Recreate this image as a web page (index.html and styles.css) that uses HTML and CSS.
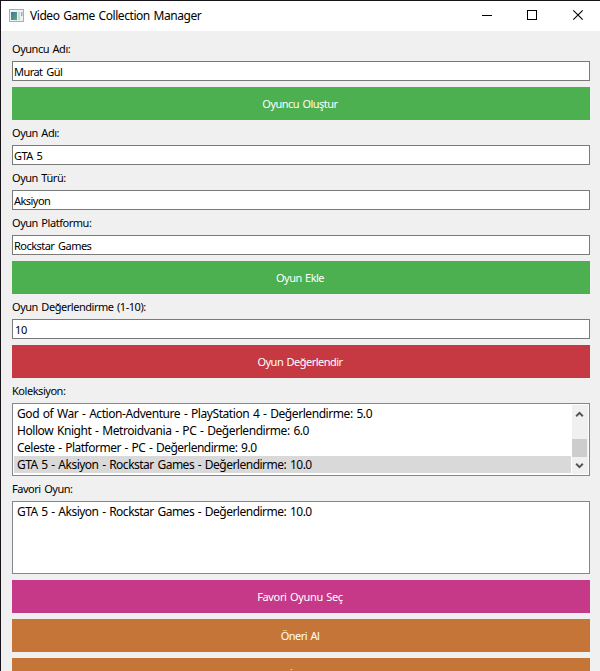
FILE: index.html
```html
<!DOCTYPE html>
<html lang="tr">
<head>
<meta charset="utf-8">
<title>Video Game Collection Manager</title>
<link rel="stylesheet" href="styles.css">
</head>
<body>
<div class="window">
  <header class="titlebar">
    <svg class="app-icon" width="15" height="13" viewBox="0 0 15 13">
      <defs><linearGradient id="g" x1="0" y1="0" x2="1" y2="1"><stop offset="0" stop-color="#4a6fa0"/><stop offset="1" stop-color="#4fae78"/></linearGradient></defs>
      <rect x=".5" y=".5" width="14" height="12" fill="#eef1f3" stroke="#a9aeb3"/>
      <rect x="2" y="3" width="6" height="8" fill="url(#g)"/>
      <rect x="9" y="3" width="2" height="8" fill="#c9dcd8"/>
      <rect x="12" y="3" width="1.500" height="4" fill="#8fb3c0"/>
    </svg>
    <h1 class="title">Video Game Collection Manager</h1>
    <div class="controls">
      <svg width="46" height="30" viewBox="0 0 46 30"><path d="M18 14.500h10" stroke="#000"/></svg>
      <svg width="46" height="30" viewBox="0 0 46 30"><rect x="17.500" y="9.500" width="9" height="9" fill="none" stroke="#000"/></svg>
      <svg width="46" height="30" viewBox="0 0 46 30"><path d="M17.300 9.300l9.400 9.400M26.700 9.300l-9.400 9.400" stroke="#000" stroke-width="1.100"/></svg>
    </div>
  </header>
  <main class="form">
    <div class="label">Oyuncu Adı:</div>
    <div class="input">Murat Gül</div>
    <div class="button green">Oyuncu Oluştur</div>
    <div class="label">Oyun Adı:</div>
    <div class="input">GTA 5</div>
    <div class="label">Oyun Türü:</div>
    <div class="input">Aksiyon</div>
    <div class="label">Oyun Platformu:</div>
    <div class="input">Rockstar Games</div>
    <div class="button green">Oyun Ekle</div>
    <div class="label">Oyun Değerlendirme (1-10):</div>
    <div class="input spin">10</div>
    <div class="button red">Oyun Değerlendir</div>
    <div class="label">Koleksiyon:</div>
    <div class="list">
      <ul class="items">
        <li>God of War - Action-Adventure - PlayStation 4 - Değerlendirme: 5.0</li>
        <li>Hollow Knight - Metroidvania - PC - Değerlendirme: 6.0</li>
        <li class="tight">Celeste - Platformer - PC - Değerlendirme: 9.0</li>
        <li class="tight selected">GTA 5 - Aksiyon - Rockstar Games - Değerlendirme: 10.0</li>
      </ul>
      <div class="scrollbar">
        <svg width="15" height="17" viewBox="0 0 15 17"><path d="M4.200 11.200L7.500 7.900l3.300 3.300" fill="none" stroke="#555" stroke-width="2"/></svg>
        <div class="track"><div class="thumb"></div></div>
        <svg width="15" height="17" viewBox="0 0 15 17"><path d="M4.200 6.800l3.300 3.300 3.300-3.300" fill="none" stroke="#555" stroke-width="2"/></svg>
      </div>
    </div>
    <div class="label">Favori Oyun:</div>
    <div class="list">
      <ul class="items">
        <li class="tight">GTA 5 - Aksiyon - Rockstar Games - Değerlendirme: 10.0</li>
      </ul>
    </div>
    <div class="button pink">Favori Oyunu Seç</div>
    <div class="button orange">Öneri Al</div>
    <div class="button orange">İptal</div>
  </main>
</div>
</body>
</html>
```
FILE: styles.css
```css
* { box-sizing: border-box; }
body { margin: 0; overflow: hidden; }
.window {
  height: 671px;
  overflow: hidden;
  border-top: 1px solid #17151a;
  border-left: 1px solid #17151a;
  background: #f0f0f0;
  font-family: "Noto Sans", sans-serif;
  word-spacing: 1px;
  color: #000;
}
.titlebar { display: flex; align-items: center; height: 30px; padding-left: 8px; background: #fff; }
.app-icon { flex: none; margin-bottom: 2px; }
.title { flex: 1; margin: 0 0 0 6px; font-size: 12px; font-weight: 400; line-height: 30px; letter-spacing: -0.44px; white-space: nowrap; }
.controls { display: flex; flex: none; margin-right: -2px; }
.form { display: flex; flex-direction: column; gap: 6px; padding: 11px 10px 0 11px; }
.form > * { flex: none; }
.label { height: 13px; font-size: 11px; line-height: 14px; letter-spacing: -0.46px; white-space: nowrap; }
.input { height: 20px; padding-left: 1px; border: 1px solid #7a7a7a; background: #fff; font-size: 11px; line-height: 20px; letter-spacing: -0.54px; word-spacing: 1.5px; }
.spin { padding-left: 2px; letter-spacing: -0.2px; }
.button { height: 33px; padding-right: 2px; color: #fff; font-size: 11px; line-height: 34px; text-align: center; letter-spacing: -0.52px; }
.green { background: #4caf50; }
.red { background: #c63842; }
.pink { background: #c63888; letter-spacing: -0.36px; }
.orange { background: #c67538; }
.list { display: flex; height: 73px; padding: 1px; border: 1px solid #828790; background: #fff; }
.items { flex: 1; margin: 0; padding: 0 1px 0 0; list-style: none; font-size: 12px; line-height: 17px; letter-spacing: -0.43px; white-space: nowrap; }
.items li { height: 17px; padding-left: 3px; }
.items .tight { letter-spacing: -0.5px; }
.selected { background: #d9d9d9; }
.scrollbar { display: flex; flex-direction: column; width: 16px; padding-right: 1px; background: #f0f0f0; }
.track { flex: 1; }
.thumb { height: 18px; margin-top: 17px; background: #cdcdcd; }
```
